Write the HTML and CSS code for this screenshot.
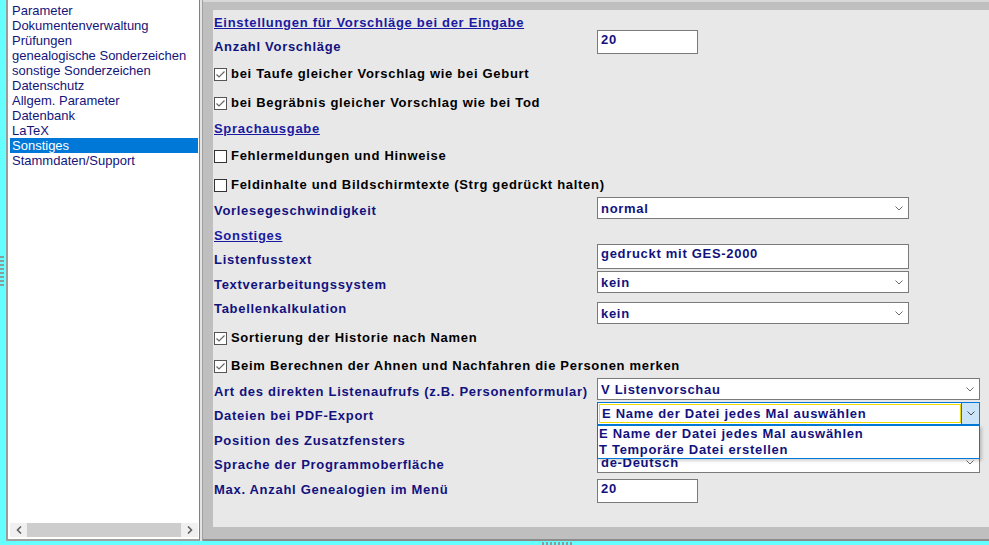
FILE: index.html
```html
<!DOCTYPE html>
<html lang="de">
<head>
<meta charset="utf-8">
<title>Einstellungen</title>
<link rel="stylesheet" href="styles.css">
</head>
<body>
<div class="app">
  <div class="main">
    <div class="edge"><div class="grip-v"></div></div>
    <div class="listbox">
      <ul class="list">
        <li>Parameter</li>
        <li>Dokumentenverwaltung</li>
        <li>Prüfungen</li>
        <li>genealogische Sonderzeichen</li>
        <li>sonstige Sonderzeichen</li>
        <li>Datenschutz</li>
        <li>Allgem. Parameter</li>
        <li>Datenbank</li>
        <li>LaTeX</li>
        <li class="sel">Sonstiges</li>
        <li>Stammdaten/Support</li>
      </ul>
      <div class="hscroll">
        <span class="sbtn"><svg width="6" height="8" viewBox="0 0 6 8"><path d="M5 0.5 L1.5 4 L5 7.5" fill="none" stroke="#606060" stroke-width="1.6"/></svg></span>
        <span class="thumb"></span>
        <span class="sbtn"><svg width="6" height="8" viewBox="0 0 6 8"><path d="M1 0.5 L4.5 4 L1 7.5" fill="none" stroke="#606060" stroke-width="1.6"/></svg></span>
      </div>
    </div>
    <div class="splitter"></div>
    <div class="panel">
      <div class="content">
        <div class="row r1"><span class="head">Einstellungen für Vorschläge bei der Eingabe</span></div>
        <div class="row r2"><span class="lab m9">Anzahl Vorschläge</span><div class="ctl inp small">20</div></div>
        <div class="row r3"><span class="cb on"></span><span class="cbl">bei Taufe gleicher Vorschlag wie bei Geburt</span></div>
        <div class="row r4"><span class="cb on"></span><span class="cbl">bei Begräbnis gleicher Vorschlag wie bei Tod</span></div>
        <div class="row r5"><span class="head">Sprachausgabe</span></div>
        <div class="row r6"><span class="cb"></span><span class="cbl">Fehlermeldungen und Hinweise</span></div>
        <div class="row r7"><span class="cb"></span><span class="cbl">Feldinhalte und Bildschirmtexte (Strg gedrückt halten)</span></div>
        <div class="row r8"><span class="lab m6">Vorlesegeschwindigkeit</span><div class="ctl sel mid"><span>normal</span><svg class="chev" width="8" height="5" viewBox="0 0 8 5"><path d="M0.5 0.5 L4 4 L7.5 0.5" fill="none" stroke="#6a6a6a" stroke-width="1"/></svg></div></div>
        <div class="row r9"><span class="head">Sonstiges</span></div>
        <div class="row r10"><span class="lab m8">Listenfusstext</span><div class="ctl inp mid tall">gedruckt mit GES-2000</div></div>
        <div class="row r11"><span class="lab m6">Textverarbeitungssystem</span><div class="ctl sel mid"><span>kein</span><svg class="chev" width="8" height="5" viewBox="0 0 8 5"><path d="M0.5 0.5 L4 4 L7.5 0.5" fill="none" stroke="#6a6a6a" stroke-width="1"/></svg></div></div>
        <div class="row r12"><span class="lab">Tabellenkalkulation</span><div class="ctl sel mid m1"><span>kein</span><svg class="chev" width="8" height="5" viewBox="0 0 8 5"><path d="M0.5 0.5 L4 4 L7.5 0.5" fill="none" stroke="#6a6a6a" stroke-width="1"/></svg></div></div>
        <div class="row r13"><span class="cb on"></span><span class="cbl">Sortierung der Historie nach Namen</span></div>
        <div class="row r14"><span class="cb on"></span><span class="cbl">Beim Berechnen der Ahnen und Nachfahren die Personen merken</span></div>
        <div class="row r15"><span class="lab m6">Art des direkten Listenaufrufs (z.B. Personenformular)</span><div class="ctl sel wide"><span>V Listenvorschau</span><svg class="chev" width="8" height="5" viewBox="0 0 8 5"><path d="M0.5 0.5 L4 4 L7.5 0.5" fill="none" stroke="#6a6a6a" stroke-width="1"/></svg></div></div>
        <div class="row r16"><span class="lab m6">Dateien bei PDF-Export</span>
          <div class="combo">
            <div class="ctl focus wide"><span class="ftext">E Name der Datei jedes Mal auswählen</span><span class="dbtn"><svg width="8" height="5" viewBox="0 0 8 5"><path d="M0.5 0.5 L4 4 L7.5 0.5" fill="none" stroke="#4a4a4a" stroke-width="1"/></svg></span></div>
            <ul class="dropdown">
              <li>E Name der Datei jedes Mal auswählen</li>
              <li>T Temporäre Datei erstellen</li>
            </ul>
          </div>
        </div>
        <div class="row r17"><span class="lab m6">Position des Zusatzfensters</span><div class="ctl sel wide"><span></span><svg class="chev" width="8" height="5" viewBox="0 0 8 5"><path d="M0.5 0.5 L4 4 L7.5 0.5" fill="none" stroke="#6a6a6a" stroke-width="1"/></svg></div></div>
        <div class="row r18"><span class="lab m6">Sprache der Programmoberfläche</span><div class="ctl sel wide"><span>de-Deutsch</span><svg class="chev" width="8" height="5" viewBox="0 0 8 5"><path d="M0.5 0.5 L4 4 L7.5 0.5" fill="none" stroke="#6a6a6a" stroke-width="1"/></svg></div></div>
        <div class="row r19"><span class="lab m3">Max. Anzahl Genealogien im Menü</span><div class="ctl inp small">20</div></div>
      </div>
    </div>
  </div>
  <div class="bottom"><div class="grip-h"></div></div>
</div>
</body>
</html>
```

FILE: styles.css
```css
* { box-sizing: border-box; }
html, body { margin: 0; padding: 0; }
body {
  background: #66ffff;
  font-family: "Liberation Sans", Arial, sans-serif;
  overflow: hidden;
}
.app { width: 989px; height: 545px; display: flex; flex-direction: column; }
.main { display: flex; height: 541px; }
.edge { width: 6px; display: flex; align-items: center; }
.grip-v {
  width: 4px; height: 30px;
  background: repeating-linear-gradient(to bottom, #8a9c9c 0 2px, transparent 2px 4px);
}
.listbox {
  width: 194px;
  background: #fff;
  border-left: 2px solid #9c9c9c;
  border-right: 1px solid #808080;
  border-bottom: 2px solid #a0a0a0;
  display: flex; flex-direction: column;
}
.list {
  list-style: none; margin: 0; padding: 3px 1px 0 2px;
  flex: 1;
  font-size: 13px; line-height: 15px; color: #14147a;
}
.list li { padding-left: 2px; height: 15px; white-space: nowrap; }
.list li.sel { background: #0078d7; color: #fff; }
.hscroll {
  height: 14px; margin: 0 1px 2px 2px;
  display: flex; background: #f0f0f0;
}
.sbtn { width: 17px; display: flex; align-items: center; justify-content: center; }
.thumb { flex: 1; background: #cdcdcd; }
.splitter {
  width: 3px;
  background: linear-gradient(to right, #e4e4e4 0 2px, #a0a0a0 2px 3px);
}
.panel {
  flex: 1;
  background: #bfbfbf;
  border-top: 2px solid #d8d8d8;
  border-bottom: 2px solid #8c8c8c;
  padding: 8px 0 12px 10px;
}
.content {
  height: 517px;
  background: #e8e8e8;
  padding: 5px 0 0 1px;
  font-size: 13px; font-weight: bold; line-height: 15px;
  letter-spacing: 0.7px;
}
.row { display: flex; align-items: flex-start; white-space: nowrap; }
.r1 { height: 15px; } .r2 { height: 36px; } .r3 { height: 29px; } .r4 { height: 26px; }
.r5 { height: 27px; } .r6 { height: 29px; } .r7 { height: 20px; } .r8 { height: 31px; }
.r9 { height: 16px; } .r10 { height: 27px; } .r11 { height: 30px; } .r12 { height: 29px; }
.r13 { height: 28px; } .r14 { height: 20px; } .r15 { height: 24px; } .r16 { height: 25px; }
.r17 { height: 24px; } .r18 { height: 28px; } .r19 { height: 30px; }
.head { color: #1a1aa0; text-decoration: underline; }
.lab { width: 383px; color: #12127e; flex: none; }
.m3 { margin-top: 3px; } .m6 { margin-top: 6px; } .m8 { margin-top: 8px; } .m9 { margin-top: 9px; }
.m1 { margin-top: 1px; }
.cb {
  width: 13px; height: 13px; flex: none;
  margin-top: 2px; margin-right: 4px;
  background: #fff; border: 1px solid #333;
}
.cb.on {
  border-color: #555;
  background: #fff url("data:image/svg+xml,%3Csvg xmlns='http://www.w3.org/2000/svg' width='11' height='11' viewBox='0 0 11 11'%3E%3Cpath d='M1.5 5.5 L4 8 L9.5 2.5' fill='none' stroke='%23666' stroke-width='1.2'/%3E%3C/svg%3E") no-repeat center;
}
.cbl { color: #000; }
.ctl {
  background: #fff; border: 1px solid #7a7a7a;
  color: #12127e; flex: none;
}
.inp { height: 24px; padding: 1px 3px; }
.inp.tall { height: 25px; }
.small { width: 101px; }
.mid { width: 312px; }
.wide { width: 383px; }
.sel { height: 22px; padding: 0 5px 0 3px; display: flex; align-items: center; }
.chev { margin-left: auto; }
.combo { position: relative; flex: none; }
.focus {
  height: 23px; display: flex; border-color: #0078d7; padding: 1px 0 1px 1px;
}
.ftext { flex: 1; border: 1px solid #ecdc00; padding-left: 2px; line-height: 17px; }
.dbtn {
  width: 18px; margin: -1px 0; background: #cce4f7;
  border-left: 1px solid #0078d7;
  display: flex; align-items: center; justify-content: center;
}
.dropdown {
  position: absolute; left: 0; top: 23px;
  width: 383px; margin: 0; padding: 0 0 0 1px;
  list-style: none;
  background: #fff; border: 1px solid #0078d7;
  box-shadow: 2px 2px 3px rgba(0,0,0,0.18);
  color: #12127e; line-height: 16px;
  z-index: 2;
}
.bottom { flex: 1; display: flex; }
.grip-h {
  margin-left: 542px; margin-top: 1px;
  width: 30px; height: 3px;
  background: repeating-linear-gradient(to right, #8a9c9c 0 2px, transparent 2px 4px);
}
```
